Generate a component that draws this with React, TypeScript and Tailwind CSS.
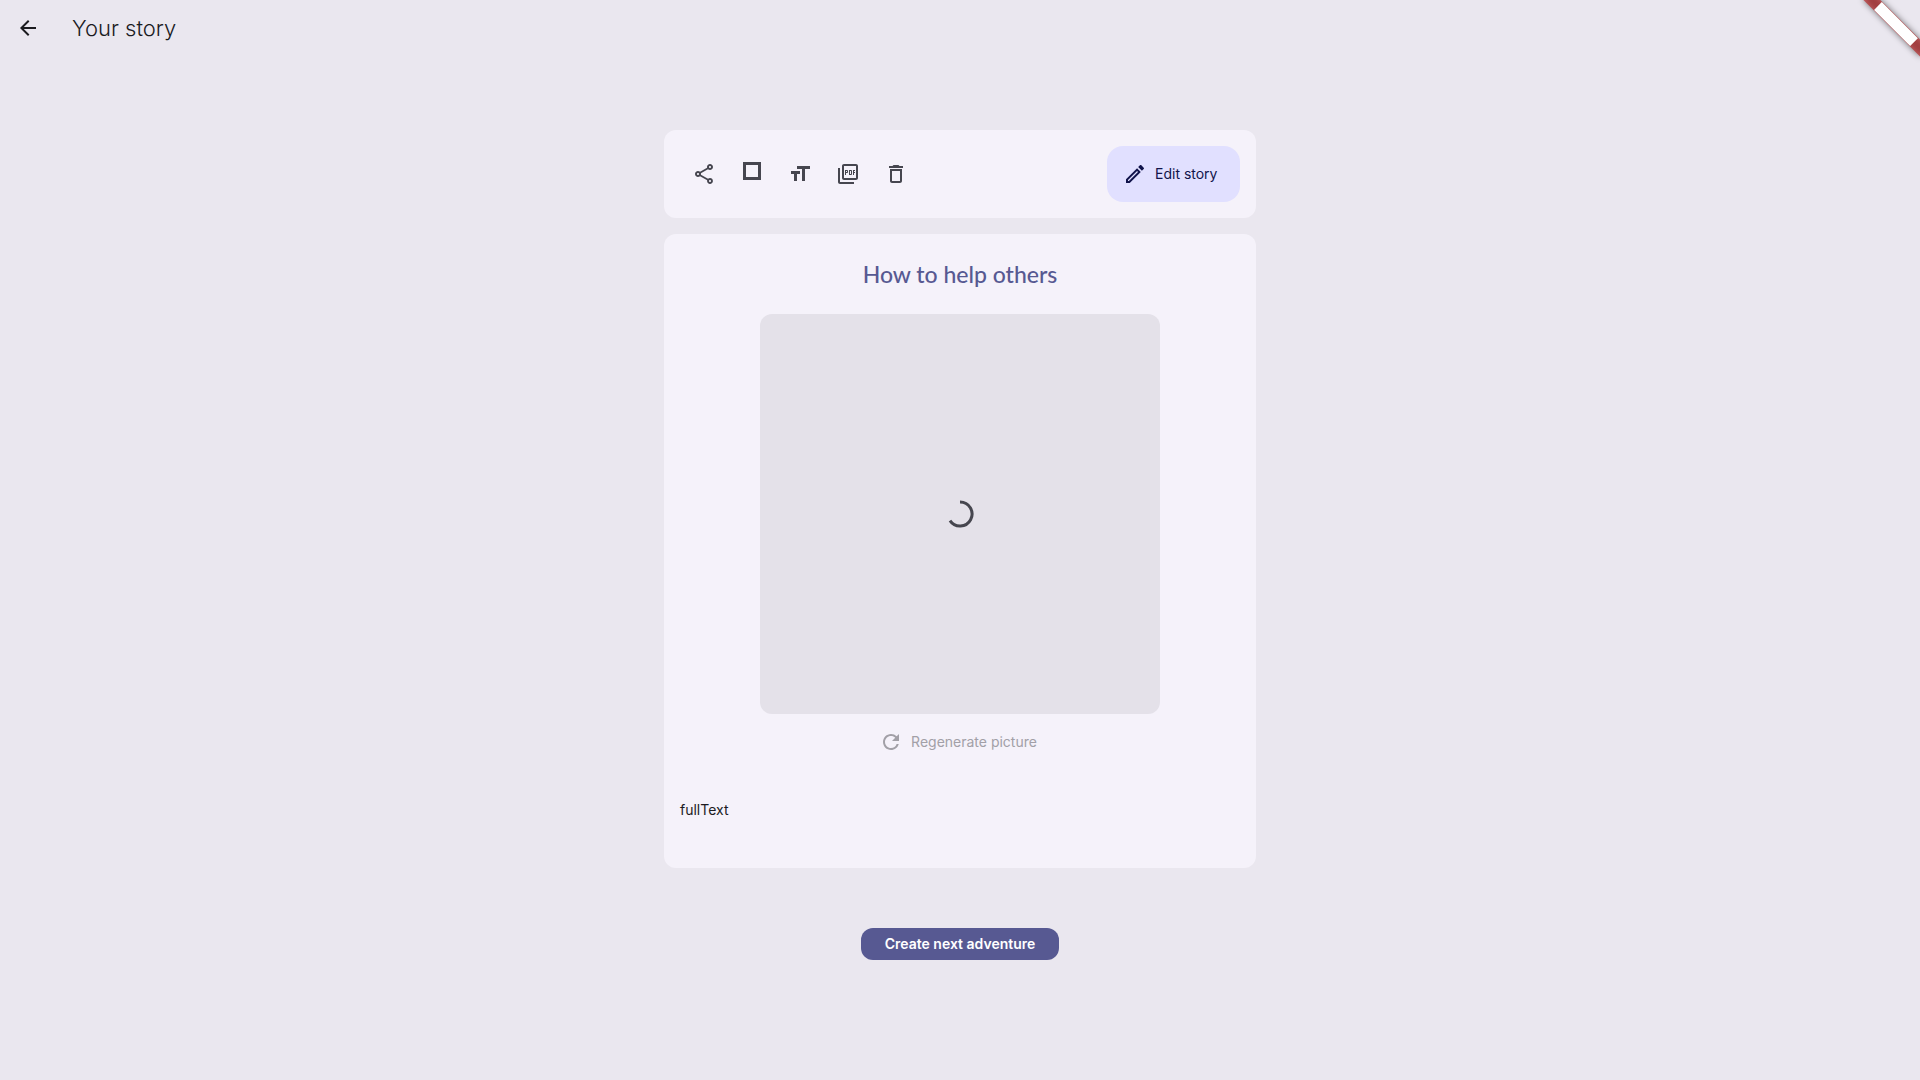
import React from "react";
import {
  MdArrowBack,
  MdDeleteOutline,
  MdFormatSize,
  MdOutlineEdit,
  MdOutlinePictureAsPdf,
  MdOutlineShare,
  MdRefresh,
} from "react-icons/md";

function CornerBanner() {
  return (
    <svg className="pointer-events-none absolute top-0 right-0" width="80" height="80" viewBox="0 0 80 80" aria-hidden="true">
      <defs>
        <filter id="banner-shadow" x="-20%" y="-80%" width="140%" height="260%">
          <feGaussianBlur stdDeviation="3" />
        </filter>
      </defs>
      <g transform="translate(80 0) rotate(45)">
        <rect x="-40" y="28" width="80" height="12" fill="#000" fillOpacity="0.5" filter="url(#banner-shadow)" />
        <rect x="-40" y="28" width="80" height="12" fill="#b71c1c" fillOpacity="0.63" />
        <rect x="-25.5" y="28.5" width="51" height="11" fill="#fff" />
      </g>
    </svg>
  );
}

function SquareIcon() {
  return (
    <svg width="24" height="24" viewBox="0 0 24 24" fill="none" stroke="currentColor" strokeWidth="3" aria-hidden="true">
      <path d="M4.500 1.500h15v15h-15z" />
    </svg>
  );
}

function ToolButton({ label, children }: { label: string; children: React.ReactNode }) {
  return (
    <button type="button" aria-label={label} className="flex size-12 items-center justify-center rounded-full text-[#46464f]">
      {children}
    </button>
  );
}

export default function App() {
  return (
    <div className="relative min-h-screen overflow-hidden bg-[#eae7ef] font-['Inter',sans-serif] text-[#1b1b1f]">
      <header className="flex h-14 items-center gap-4">
        <button type="button" aria-label="Back" className="flex size-14 items-center justify-center">
          <MdArrowBack size={24} />
        </button>
        <h1 className="text-[22px] leading-7 font-light">Your story</h1>
      </header>

      <main className="mx-auto mt-[74px] flex w-full max-w-[592px] flex-col">
        <section className="flex items-center justify-between rounded-xl bg-[#f5f2fa] p-4">
          <div className="flex">
            <ToolButton label="Share"><MdOutlineShare size={24} /></ToolButton>
            <ToolButton label="Background"><SquareIcon /></ToolButton>
            <ToolButton label="Text size"><MdFormatSize size={24} /></ToolButton>
            <ToolButton label="Save as PDF"><MdOutlinePictureAsPdf size={24} /></ToolButton>
            <ToolButton label="Delete"><MdDeleteOutline size={24} /></ToolButton>
          </div>
          <button type="button" className="flex h-14 min-w-[133px] items-center gap-2 rounded-2xl bg-[#e1e0ff] pr-5 pl-4 text-sm text-[#11144b]">
            <MdOutlineEdit size={24} />
            Edit story
          </button>
        </section>

        <section className="mt-4 flex flex-col items-center rounded-xl bg-[#f5f2fa] px-4 pt-6 pb-12">
          <h2 className="font-['Lato',sans-serif] text-[23px] leading-8 font-medium text-[#575992]">How to help others</h2>
          <div className="mt-6 flex aspect-square w-full max-w-[400px] items-center justify-center rounded-xl bg-[#e4e1e9]">
            <svg width="28" height="28" viewBox="0 0 28 28" fill="none" stroke="#46464f" strokeWidth="3" role="img" aria-label="Loading">
              <path d="M14 2a12 12 0 1 1-10 18.600" />
            </svg>
          </div>
          <button type="button" disabled className="mt-2 flex h-10 items-center gap-2 pr-4 pl-3 text-sm text-[#a2a0a7]">
            <MdRefresh size={24} />
            Regenerate picture
          </button>
          <p className="mt-[38px] self-start text-sm leading-5">fullText</p>
        </section>

        <button type="button" className="mt-[60px] h-8 self-center rounded-xl bg-[#575992] px-6 text-sm font-semibold text-white">
          Create next adventure
        </button>
      </main>

      <CornerBanner />
    </div>
  );
}
